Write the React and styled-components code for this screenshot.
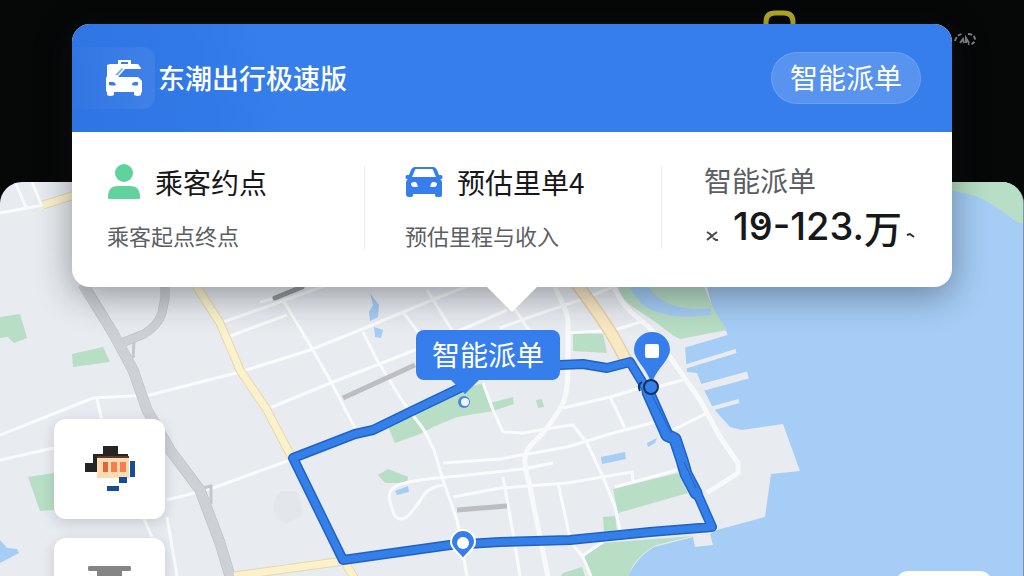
import React from "react"
import styled, { createGlobalStyle, ThemeProvider } from "styled-components"

const theme = {
  colors: {
    primary: "#367eec",
    primaryDark: "#2f74e3",
    route: "#3580e8",
    routeEdge: "#1f62c6",
    land: "#e8ebf0",
    park: "#b8dec5",
    sea: "#a5cdf5",
    trunk: "#cdd0d4",
    green: "#5fd39b",
    text: "#17181a",
    grey: "#5b5e63",
    white: "#ffffff",
  },
  font: `"Noto Sans CJK SC", "Noto Sans", sans-serif`,
}

const GlobalStyle = createGlobalStyle`
  * {
    box-sizing: border-box;
  }
  body {
    margin: 0;
    background: #060707;
    font-family: ${theme.font};
    color: ${theme.colors.text};
  }
  h1, h2, p {
    margin: 0;
    font-weight: 400;
  }
`

const Page = styled.main`
  position: relative;
  display: flex;
  flex-direction: column;
  height: 100vh;
  overflow: hidden;
`

const TopBar = styled.div`
  display: flex;
  justify-content: flex-end;
  align-items: flex-start;
  gap: 156px;
  flex: 0 0 182px;
  padding: 9px 47px 0;
`

const MapPanel = styled.section`
  position: relative;
  flex: 1;
  overflow: hidden;
  border-radius: 22px 22px 0 0;
  border-right: 1px solid #7d93a8;
  background: ${({ theme }) => theme.colors.land};
`

const MapCanvas = styled.svg`
  display: block;
  width: 100%;
  height: 100%;
`

// the order card floats over the map
const Card = styled.article`
  position: absolute;
  top: 24px;
  left: 72px;
  right: 72px;
  border-radius: 18px;
  background: ${({ theme }) => theme.colors.white};
  box-shadow: 0 8px 36px rgba(20, 24, 32, 0.42);

  &::after {
    content: "";
    position: absolute;
    top: 100%;
    left: 50%;
    margin-left: -25px;
    border: 25px solid transparent;
    border-bottom-width: 0;
    border-top-color: ${({ theme }) => theme.colors.white};
  }
`

const CardHeader = styled.header`
  display: flex;
  align-items: center;
  justify-content: space-between;
  height: 108px;
  padding-right: 31px;
  border-radius: 18px 18px 0 0;
  background: linear-gradient(
    75deg,
    ${({ theme }) => theme.colors.primaryDark} 0%,
    #3279e8 16%,
    ${({ theme }) => theme.colors.primary} 24%
  );
`

const Brand = styled.div`
  display: flex;
  align-items: center;
  gap: 3px;

  h1 {
    font-size: 27px;
    font-weight: 500;
    line-height: 36px;
    color: ${({ theme }) => theme.colors.white};
  }
`

const LogoTile = styled.div`
  display: flex;
  justify-content: flex-end;
  width: 83px;
  padding: 12px 12px 12px 0;
  border-radius: 0 12px 12px 0;
  background: linear-gradient(90deg, rgba(255, 255, 255, 0.01), rgba(255, 255, 255, 0.07));
`

const PillButton = styled.button`
  padding: 6px 18px 8px;
  border: 1px solid rgba(255, 255, 255, 0.12);
  border-radius: 26px;
  background: rgba(255, 255, 255, 0.17);
  color: ${({ theme }) => theme.colors.white};
  font-family: inherit;
  font-size: 28px;
  line-height: 36px;
  cursor: pointer;
`

const CardBody = styled.div`
  display: grid;
  grid-template-columns: 293fr 297fr 290fr;
  padding: 34px 0 38px;
`

const Cell = styled.div`
  display: flex;
  flex-direction: column;
  gap: ${({ $gap }) => $gap || "25px"};
  padding-left: ${({ $inset }) => $inset};
  border-right: 1px solid #ececee;
  white-space: nowrap;

  &:last-child {
    border-right: none;
  }
`

const CellTitle = styled.div`
  display: flex;
  align-items: center;
  gap: ${({ $gap }) => $gap};
  height: 32px;

  h2 {
    font-size: 28px;
    line-height: 32px;
  }
`

const CellText = styled.p`
  font-size: 22px;
  line-height: 24px;
  color: ${({ theme }) => theme.colors.grey};
`

const FareLabel = styled.h2`
  font-size: 28px;
  line-height: 28px;
  color: ${({ theme }) => theme.colors.grey};
`

const Fare = styled.p`
  display: flex;
  align-items: center;
  height: 45px;
  font-family: Inter, "Liberation Sans", "Noto Sans CJK SC", sans-serif;
  font-size: 38px;
  font-weight: 500;
  line-height: 45px;

  svg {
    margin: 18px 15px 0 2px;
  }
  svg:last-child {
    margin: 16px 0 0 4px;
  }
`

const FareUnit = styled.span`
  font-family: ${({ theme }) => theme.font};
  font-size: 38px;
`

const Dotted = styled.span`
  position: relative;

  &::after {
    content: "";
    position: absolute;
    top: 16px;
    left: 10px;
    width: 5px;
    height: 5px;
    border-radius: 50%;
    background: ${({ theme }) => theme.colors.text};
  }
`

const MapTools = styled.div`
  position: absolute;
  top: 237px;
  left: 54px;
  display: flex;
  flex-direction: column;
  gap: 19px;
`

const ToolButton = styled.button`
  display: flex;
  align-items: center;
  justify-content: center;
  width: 111px;
  height: 100px;
  padding: 0;
  border: none;
  border-radius: 12px;
  background: ${({ theme }) => theme.colors.white};
  box-shadow: 0 4px 14px rgba(30, 36, 48, 0.16);
  cursor: pointer;
`

const LocateButton = styled(ToolButton)`
  position: absolute;
  top: 389px;
  right: 31px;
  width: 96px;
  box-shadow: none;
`

const MapLabel = styled.div`
  position: absolute;
  top: 148px;
  left: 416px;
  padding: 6px 16px 8px;
  border-radius: 8px;
  background: ${({ theme }) => theme.colors.primary};
  color: ${({ theme }) => theme.colors.white};
  font-size: 28px;
  line-height: 36px;

  &::after {
    content: "";
    position: absolute;
    top: 100%;
    left: 35px;
    border: 14px solid transparent;
    border-bottom-width: 0;
    border-top-color: ${({ theme }) => theme.colors.primary};
  }
`

const TaxiIcon = () => (
  <svg width="38" height="38" viewBox="0 0 38 38" aria-hidden="true">
    <path
      fill="#fff"
      fillRule="evenodd"
      d="M13 1h13v4h7l3 4v1H20l-7 8h20l4 4v11l-1 1v2q-3 2-7 0v-3H9v3q-4 2-7 0v-3l-1-1V19l1-2V6l3-1h8V1zm3 2v2h7V3h-7zM4 23v3q4 1 7 0-1-3-3-3H4zm29 0h-3q-3 0-3 3 4 1 6 0v-3z"
    />
    <path fill="#7ea8f0" d="m10 16 7-7 1 1-5 6z" />
  </svg>
)

const PersonIcon = () => (
  <svg width="34" height="36" viewBox="0 0 34 36" aria-hidden="true">
    <g fill={theme.colors.green}>
      <circle cx="17" cy="9" r="9" />
      <path d="M1 33c0-8 4-11 10-11h12c6 0 10 3 10 11 0 1 0 2-1 2H2c-1 0-1-1-1-2z" />
    </g>
  </svg>
)

const CarIcon = () => (
  <svg width="38" height="32" viewBox="0 0 38 32" aria-hidden="true">
    <path
      fill={theme.colors.primary}
      fillRule="evenodd"
      d="M10 1h18c2 0 3 1 4 3l2 5h2c2 0 2 4 0 4h-1c2 1 2 3 2 5v10c0 3-1 3-3 3h-2c-2 0-2-1-2-3H8c0 2 0 3-2 3H4c-2 0-3-1-3-3V18c0-2 0-4 2-5H2c-2 0-2-4 0-4h2l2-5c1-2 2-3 4-3zm0 3-3 7h24l-3-7c0-1-1-1-2-1H12c-1 0-2 0-2 1zM9 16c-2 0-3 1-3 2s1 3 3 3h3c1 0 1-1 0-3s-1-2-3-2zm20 0c-2 0-2 0-3 2s-1 3 0 3h3c2 0 3-2 3-3s-1-2-3-2z"
    />
  </svg>
)

const RiderIcon = () => (
  <svg width="50" height="46" viewBox="84 446 50 46" shapeRendering="crispEdges" aria-hidden="true">
    <path fill="#262424" d="M102 446h15v8h10v3H96v15h-5v-9h-7v9h8v-18h10z" />
    <path fill="#262424" d="M84 463h8v9h-8z" />
    <path fill="#fbdcb0" d="M96 457h32v21H96z" />
    <path fill="#5b3a2c" d="M96 456h32v2H96z" />
    <path fill="#e0663a" d="M102 462h5v10h-5z" />
    <path fill="#fb7c4f" d="M110 462h6v10h-6zM119 462h6v10h-6z" />
    <path fill="#174c96" d="M129 461h5v16h-5zM118 477h8v6h-8zM106 486h12v5h-12z" />
  </svg>
)

const StandIcon = () => (
  <svg width="43" height="44" viewBox="0 0 43 44" aria-hidden="true">
    <path fill="#858585" d="M1 0h41q1 0 1 2v1q0 2-1 2h-8v39H9V5H1q-1 0-1-2V2q0-2 1-2z" />
  </svg>
)

const whiteRoads = [
  "M0 213 43 205M15 182l11 25M32 182l9 22",
  "M223 322 280 302 330 284M230 336l57-21",
  "M0 435 63 410 93 398 150 395 240 372 310 350 360 330 427 302 470 285",
  "M267 409 333 382 377 365 415 350 507 310",
  "M283 300 310 345 330 380 355 428",
  "M363 332 377 360 403 402 424 430 434 450 443 480 457 520 467 576",
  "M403 312l18 24M427 290l26 42",
  "M500 328 530 317 580 300 613 287M514 308l16 24",
  "M563 408 610 397 640 388M657 387l26-7M610 397l15 31",
  "M443 463 500 459 567 447 613 433 663 420M673 430l34-17",
  "M453 497 500 488 567 483 632 472 633 481",
  "M483 383l10 27 10 22 20 1 34-6 16-2 14 18 16 34 12 30 5 23",
  "M615 487l62-17",
  "M640 322l-25 8-47 3M615 330l-8 3",
  "M558 483l12 55M503 477l10 56 7 43",
  "M443 485c-20 4-18 10-26 20-6 8-10 14-16 14-7 0-8-8-10-14-3-8-3-14 5-19 8-5 50-9 62-10l65-7 30-6",
  "M167 500l46-12 77-28M167 517l10 59M143 517l9 20",
  "M0 460l54-12M97 399l5 22",
  "M573 545l10 12 8 19M582 556l21-14",
  "M260 302l23-6",
]

const mainRoads = [
  "M555 287c4 12 13 22 13 35v35c0 18 0 34-5 46-6 12-12 20-20 30-9 10-20 16-18 30 1 14 5 20 6 30l9 44 10 50",
  "M613 284c8 22 18 28 37 44l27 39 23 33 20 37 18 26v10l-31 20",
]

const routePath =
  "M560 365l23-1 24 4 23-6 17 28 20 47 8 2 7 21 4 14 11 19 15 34-62 5-80 8-70 2-50 3-107 15-50-102 62-24 18-4 37-18 50-24"

const doubledPath = "M648 392l19 43 8 4 7 21 4 14 10 19"

const CityMap = () => (
  <MapCanvas viewBox="0 182 1023 394" preserveAspectRatio="xMinYMin slice" aria-label="地图">
    <path
      fill={theme.colors.sea}
      d="M940 182h84v394H628c6-12 14-22 26-29l39-10 2 10 18-2-3-11 7-4 48-13 6-43 29-3-17-47-41 6-12-3-17-19-10-20-6-15-10-1-2-25 42-14-14-23-6-23z"
    />
    <path fill={theme.colors.park} d="M940 182h84v42c-10-1-18-12-30-18-12-8-24-14-54-16z" />
    <g fill={theme.colors.park}>
      <path d="M616 284c6 14 10 18 17 23l24 16c8 6 14 12 23 16l47-9-14-22-10-24z" />
      <path d="M0 317l20-3 7 24-13 5-6-6-8 1zM72 354l31-7 7 15-37 5zM28 477l26-4v37l-14 1z" />
      <path d="M388 427l29-17 43-20 23-7 7 20 23-6 1 7-21 7-36 6-24 10-13 7-25 9zM536 400l6-1 2 8-6 1z" />
      <path d="M378 475l10-6 20 8-1 6h-22zM573 333l30 1 4 19-34-2zM613 489l65-16 10 20-70 20z" />
      <path d="M603 517l12-1 2 14-13 2zM584 557l19-14 90-7-36 9c-14 6-24 18-29 31h-38zM563 573l19-6 3 9h-24z" />
    </g>
    <g fill={theme.colors.sea}>
      <path d="M628 284c8 16 16 24 29 28 14 5 30 6 55 3l-2-7c-12 2-22 1-30-1-14-3-26-10-33-23z" />
      <path d="M370 293l9 12-1 12-8 4-1-9 4-7zM374 327l9 3-2 8-6-1zM395 491l13-5 1 6-12 3z" />
      <path d="M0 540l7 8 10 1 2 4-19 10zM601 457l24-5 1 7-24 5zM647 443l10-5-2 5-7 4z" />
    </g>
    <g fill="none" stroke={theme.colors.land}>
      <path strokeWidth="4" d="M684 367l52-16M710 409l29-8M683 346l44-13" />
      <path strokeWidth="7" d="M700 388l48-13" />
    </g>
    <path fill="#e3e6ea" d="M281 491h16q5 12 5 24l-14 8q-8 0-12-6-6-18 5-26z" />
    <g fill="none" stroke="#fafbfc" strokeWidth="3" strokeLinejoin="round">
      {whiteRoads.map((d) => (
        <path key={d} d={d} />
      ))}
    </g>
    <g fill="none" stroke="#f8f9fb" strokeWidth="5" strokeLinejoin="round">
      {mainRoads.map((d) => (
        <path key={d} d={d} />
      ))}
    </g>
    <g fill="none" stroke="#bdbec1" strokeWidth="5">
      <path stroke="#96989b" strokeLinecap="round" d="M275 298l27-11" />
      <path d="M343 398l72-33M457 510l50-4" />
    </g>
    <g fill="none" strokeLinejoin="round">
      <path stroke="#babdc2" strokeWidth="11" d="M83 284l30 49 20 37 14 40 23 40 30 40 20 53 12 40" />
      <path stroke="#babdc2" strokeWidth="9" d="M165 284v14l-3 15c-3 10-10 16-18 21l-20 8" />
      <path stroke="#c3c6ca" strokeWidth="3" d="M134 342l-1 16M199 489l12-3v18" />
      <path stroke={theme.colors.trunk} strokeWidth="10" d="M83 284l30 49 20 37 14 40 23 40 30 40 20 53 12 40" />
      <path stroke={theme.colors.trunk} strokeWidth="8" d="M165 284v14l-3 15c-3 10-10 16-18 21l-20 8" />
      <path stroke="#e6d9a8" strokeWidth="9" d="M195 284l25 39 20 47 27 40 25 48M234 576l110-15 11 18M43 205l32-10" />
      <path stroke="#fbf2cd" strokeWidth="7" d="M195 284l25 39 20 47 27 40 25 48M234 576l110-15 11 18M43 205l32-10" />
      <path stroke="#e8cfa0" strokeWidth="13" d="M577 284l23 32 13 20 13 24" />
      <path stroke="#f8e8c4" strokeWidth="10" d="M577 284l23 32 13 20 13 24" />
      <g strokeLinecap="round">
        <path stroke={theme.colors.routeEdge} strokeWidth="10" d={routePath} />
        <path stroke={theme.colors.routeEdge} strokeWidth="13" d={doubledPath} />
        <path stroke={theme.colors.route} strokeWidth="7" d={routePath} />
        <path stroke={theme.colors.route} strokeWidth="10" d={doubledPath} />
      </g>
      <path stroke={theme.colors.routeEdge} strokeWidth="1" d="M652 395l19 38M684 462l12 26" />
    </g>

    {/* destination pin */}
    <path stroke="#14366e" strokeWidth="2" fill="none" d="M642 382q-5 3-2 9" />
    <path fill={theme.colors.primary} d="M652 332a18 18 0 0 1 18 18c0 9-12 18-17 30h-3c-4-12-16-21-16-30a18 18 0 0 1 18-18z" />
    <rect x="645" y="344" width="14" height="14" rx="2" fill="#fff" />
    <circle cx="651" cy="387" r="7" fill={theme.colors.route} stroke="#12305f" strokeWidth="2" />

    {/* start pin */}
    <path
      fill={theme.colors.primary}
      stroke="#fff"
      strokeWidth="2"
      d="M463 530a12 12 0 0 1 12 12c0 7-8 11-12 17-4-6-12-10-12-17a12 12 0 0 1 12-12z"
    />
    <circle cx="463" cy="543" r="6" fill="#fff" />

    <circle cx="464" cy="402" r="6" fill="#4a86e6" />
    <circle cx="465" cy="402" r="4" fill="#f2f6fc" />
  </MapCanvas>
)

const App = () => {
  return (
    <ThemeProvider theme={theme}>
      <GlobalStyle />
      <Page>
        <TopBar>
          <svg width="35" height="24" viewBox="0 0 35 24" aria-hidden="true">
            <path fill="none" stroke="#b9aa28" strokeWidth="5" d="M4 20v-7q0-9 9-9h9q9 0 9 9v7" />
          </svg>
          <svg width="24" height="40" viewBox="0 0 24 40" aria-hidden="true">
            <g fill="none" stroke="#7d7f80" strokeWidth="2">
              <path strokeDasharray="4 2" d="M2 32q2-7 8-7M15 25q7 0 7 6-1 5-7 4" />
              <path d="M7 34l3-4 1 4M13 34v-5l3 5" />
            </g>
          </svg>
        </TopBar>
        <MapPanel>
          <CityMap />
          <MapLabel>智能派单</MapLabel>
          <MapTools>
            <ToolButton aria-label="乘客">
              <RiderIcon />
            </ToolButton>
            <ToolButton aria-label="站点">
              <StandIcon />
            </ToolButton>
          </MapTools>
          <LocateButton aria-label="定位" />
        </MapPanel>

        <Card>
          <CardHeader>
            <Brand>
              <LogoTile>
                <TaxiIcon />
              </LogoTile>
              <h1>东潮出行极速版</h1>
            </Brand>
            <PillButton>智能派单</PillButton>
          </CardHeader>
          <CardBody>
            <Cell $inset="35px">
              <CellTitle $gap="14px">
                <PersonIcon />
                <h2>乘客约点</h2>
              </CellTitle>
              <CellText>乘客起点终点</CellText>
            </Cell>
            <Cell $inset="40px">
              <CellTitle $gap="14px">
                <CarIcon />
                <h2>预估里单4</h2>
              </CellTitle>
              <CellText>预估里程与收入</CellText>
            </Cell>
            <Cell $inset="42px" $gap="10px">
              <FareLabel>智能派单</FareLabel>
              <Fare>
                <svg width="12" height="10" viewBox="0 0 12 10" aria-hidden="true">
                  <path fill="none" stroke="#45484c" strokeWidth="2" d="M1 1l3 2 3 3M11 1 7 4 1 9M7 7l3 2h2" />
                </svg>
                <span>
                  1<Dotted>9</Dotted>-123.
                </span>
                <FareUnit>万</FareUnit>
                <svg width="9" height="6" viewBox="0 0 9 6" aria-hidden="true">
                  <path fill="none" stroke="#2c2e30" strokeWidth="2" d="M1 3l3-1 4 3" />
                </svg>
              </Fare>
            </Cell>
          </CardBody>
        </Card>
      </Page>
    </ThemeProvider>
  )
}

export default App
